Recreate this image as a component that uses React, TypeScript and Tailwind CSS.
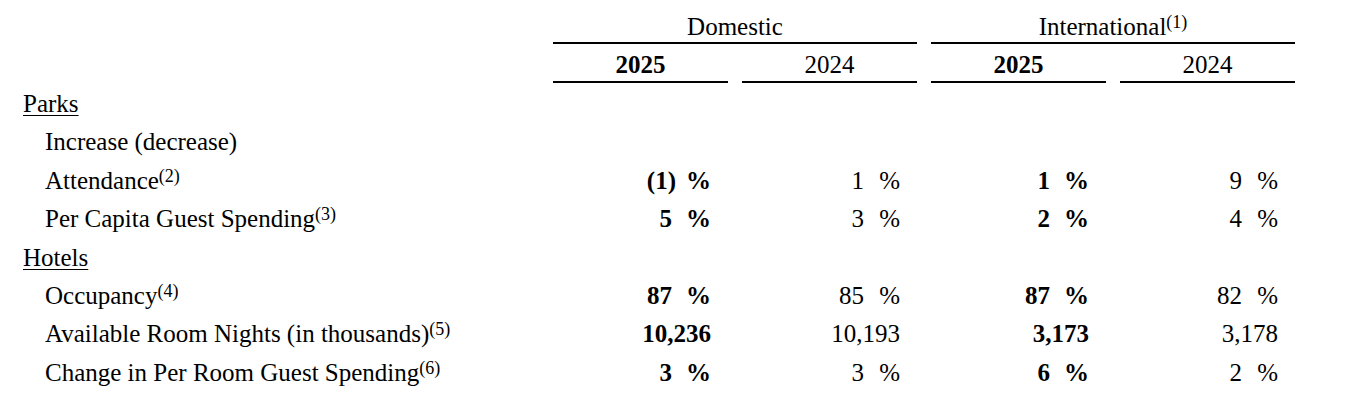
import React from 'react';

type Row = {
  label: string;
  note?: string;
  section?: boolean;
  values?: [string, string, string, string];
  pct?: boolean;
};

const rows: Row[] = [
  { label: 'Parks', section: true },
  { label: 'Increase (decrease)' },
  { label: 'Attendance', note: '(2)', values: ['(1)', '1', '1', '9'], pct: true },
  { label: 'Per Capita Guest Spending', note: '(3)', values: ['5', '3', '2', '4'], pct: true },
  { label: 'Hotels', section: true },
  { label: 'Occupancy', note: '(4)', values: ['87', '85', '87', '82'], pct: true },
  { label: 'Available Room Nights (in thousands)', note: '(5)', values: ['10,236', '10,193', '3,173', '3,178'] },
  { label: 'Change in Per Room Guest Spending', note: '(6)', values: ['3', '3', '6', '2'], pct: true },
];

const grid = 'grid grid-cols-[539px_175px_175px_175px_175px] gap-x-[14px]';

const Value = ({ value, pct, bold }: { value?: string; pct?: boolean; bold: boolean }) => {
  if (!value) return <div />;
  const negative = value.startsWith('(');
  return (
    <div className={`flex justify-end pr-[17px] ${bold ? 'font-bold' : ''}`}>
      <span>
        {negative ? (
          <>
            {value.slice(0, -1)}
            <span className="-mr-[4px]">)</span>
          </>
        ) : (
          value
        )}
      </span>
      {pct && <span className={`${bold ? 'w-[39px]' : 'w-[36px]'} text-right`}>%</span>}
    </div>
  );
};

const Note = ({ children }: { children: React.ReactNode }) => (
  <sup className="text-[18px] -top-[7px]">{children}</sup>
);

export default function App() {
  return (
    <div className="w-[1355px] h-[414px] bg-white text-black font-['Liberation_Serif',serif] text-[25px] pt-[12px]">
      <div className={grid}>
        <div />
        <div className="col-span-2 text-center leading-[30px] border-b-2 border-black">Domestic</div>
        <div className="col-span-2 text-center leading-[30px] border-b-2 border-black">
          International<Note>(1)</Note>
        </div>
      </div>
      <div className={grid}>
        <div />
        <div className="text-center font-bold leading-[30px] pt-[6px] pb-[1px] border-b-2 border-black">2025</div>
        <div className="text-center leading-[30px] pt-[6px] pb-[1px] border-b-2 border-black">2024</div>
        <div className="text-center font-bold leading-[30px] pt-[6px] pb-[1px] border-b-2 border-black">2025</div>
        <div className="text-center leading-[30px] pt-[6px] pb-[1px] border-b-2 border-black">2024</div>
      </div>
      <div className="mt-[2px]">
        {rows.map((row) => (
          <div key={row.label} className={`${grid} leading-[38.4px]`}>
            <div className={row.section ? 'pl-[23px]' : 'pl-[45px]'}>
              <span className={row.section ? 'underline decoration-1 underline-offset-[3px]' : ''}>{row.label}</span>
              {row.note && <Note>{row.note}</Note>}
            </div>
            {[0, 1, 2, 3].map((i) => (
              <Value key={i} value={row.values?.[i]} pct={row.pct} bold={i % 2 === 0} />
            ))}
          </div>
        ))}
      </div>
    </div>
  );
}
